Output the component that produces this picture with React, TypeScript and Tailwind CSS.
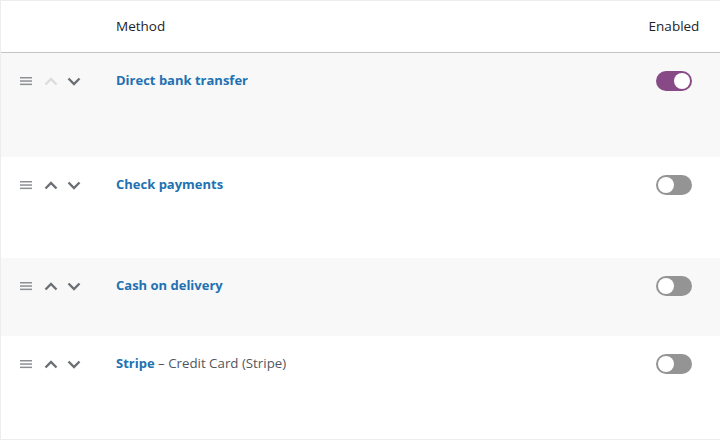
import React from 'react';

const methods = [
  { title: 'Direct bank transfer', enabled: true, first: true, h: 'h-[104px]', bg: 'bg-[#f8f8f8]' },
  { title: 'Check payments', enabled: false, h: 'h-[101px]', bg: 'bg-white' },
  { title: 'Cash on delivery', enabled: false, h: 'h-[78px]', bg: 'bg-[#f8f8f8]' },
  { title: 'Stripe', sub: 'Credit Card (Stripe)', enabled: false, h: 'h-[103px]', bg: 'bg-white' },
];

function Handle() {
  return (
    <svg width="12" height="10" viewBox="0 0 12 10" className="text-[#8c8f94]">
      <rect x="0" y="1" width="12" height="1.5" fill="currentColor" />
      <rect x="0" y="4.3" width="12" height="1.5" fill="currentColor" />
      <rect x="0" y="7.6" width="12" height="1.5" fill="currentColor" />
    </svg>
  );
}

function Chevron({ up, disabled }: { up?: boolean; disabled?: boolean }) {
  return (
    <svg width="14" height="9" viewBox="0 0 14 9" className={disabled ? 'text-[#dcdcde]' : 'text-[#6c7075]'}>
      <polyline
        points={up ? '1.5,7.5 7,2 12.5,7.5' : '1.5,1.5 7,7 12.5,1.5'}
        fill="none"
        stroke="currentColor"
        strokeWidth="2.4"
      />
    </svg>
  );
}

function Toggle({ on }: { on: boolean }) {
  return (
    <div
      className={`w-[36px] h-[20px] rounded-full flex items-center px-[2px] ${
        on ? 'bg-[#874a87] justify-end' : 'bg-[#949494] justify-start'
      }`}
    >
      <div className="w-[16px] h-[16px] rounded-full bg-white" />
    </div>
  );
}

export default function App() {
  return (
    <div
      className="w-[720px] h-[440px] bg-white border-t border-l border-b border-[#ededed] text-[13px] text-[#1d2327]"
      style={{ fontFamily: '"Open Sans", "Noto Sans", sans-serif' }}
    >
      {/* Header */}
      <div className="h-[52px] flex items-center border-b border-[#c3c4c7] text-[13.5px]">
        <div className="w-[115px]" />
        <div className="flex-1">Method</div>
        <div className="w-[72px] mr-[10px] text-center">Enabled</div>
      </div>

      {methods.map((m) => (
        <div key={m.title} className={`${m.h} ${m.bg} flex items-start pt-[18px]`}>
          <div className="w-[115px] h-[20px] flex items-center pl-[19px]">
            <Handle />
            <div className="ml-[12px] flex items-center gap-[9px]">
              <Chevron up disabled={m.first} />
              <Chevron />
            </div>
          </div>
          <div className="flex-1 h-[20px] flex items-center">
            <span className="font-bold text-[#2271b1]">{m.title}</span>
            {m.sub && <span className="text-[#50575e] text-[13.3px]">&nbsp;– {m.sub}</span>}
          </div>
          <div className="w-[72px] mr-[10px] h-[20px] flex items-center justify-center">
            <Toggle on={m.enabled} />
          </div>
        </div>
      ))}
    </div>
  );
}
